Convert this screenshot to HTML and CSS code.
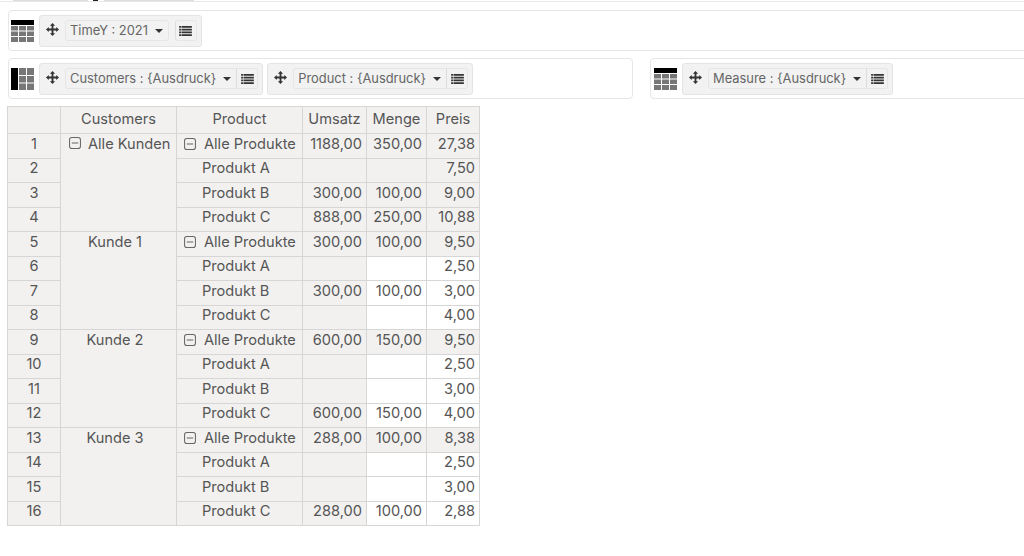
FILE: index.html
```html
<!DOCTYPE html>
<html lang="de">
<head>
<meta charset="utf-8">
<title>Pivot</title>
<link rel="stylesheet" href="styles.css">
</head>
<body>
<svg class="defs" width="0" height="0" aria-hidden="true">
  <symbol id="move" viewBox="0 0 14 14"><path d="M7 0 9.800 3H8V6H11V4.200L14 7 11 9.800V8H8V11H9.800L7 14 4.200 11H6V8H3V9.800L0 7 3 4.200V6H6V3H4.200Z" fill="#333"/></symbol>
  <symbol id="list" viewBox="0 0 14 11"><path d="M0 0h2v2H0zM2.600 0H14v2H2.600zM0 3h2v2H0zM2.600 3H14v2H2.600zM0 6h2v2H0zM2.600 6H14v2H2.600zM0 9h2v2H0zM2.600 9H14v2H2.600z" fill="#333"/></symbol>
  <symbol id="minus" viewBox="0 0 13 13"><rect x=".6" y=".6" width="11.8" height="11.8" rx="2.5" fill="none" stroke="#666" stroke-width="1.1"/><path d="M3 6.500h7" stroke="#666" stroke-width="1.1"/></symbol>
  <symbol id="rows" viewBox="0 0 23 22"><path d="M0 0h23v5H0z" fill="#000"/><path d="M0 6h7v4.500H0zM8 6h7v4.500H8zM16 6h7v4.500h-7zM0 11.500h7V16H0zM8 11.500h7V16H8zM16 11.500h7V16h-7zM0 17h7v5H0zM8 17h7v5H8zM16 17h7v5h-7z" fill="#777"/></symbol>
  <symbol id="cols" viewBox="0 0 23 22"><path d="M0 0h7v22H0z" fill="#000"/><path d="M8 0h7v7H8zM16 0h7v7h-7zM8 8h7v6.500H8zM16 8h7v6.500h-7zM8 15.500h7V22H8zM16 15.500h7V22h-7z" fill="#777"/></symbol>
</svg>

<div class="top-strip">
  <span class="strip-a"></span><span class="strip-b"></span><span class="strip-c"></span>
</div>

<div class="zone zone-time">
  <svg class="zone-icon"><use href="#rows"/></svg>
  <div class="chip">
    <svg class="move"><use href="#move"/></svg>
    <div class="pick pick-solo"><span class="pick-label">TimeY : 2021</span><span class="caret"></span></div>
    <div class="menu menu-solo"><svg class="list"><use href="#list"/></svg></div>
  </div>
</div>

<div class="zone-row">
  <div class="zone zone-left">
    <svg class="zone-icon"><use href="#cols"/></svg>
    <div class="chip">
      <svg class="move"><use href="#move"/></svg>
      <div class="pick"><span class="pick-label">Customers : {Ausdruck}</span><span class="caret"></span></div>
      <div class="menu"><svg class="list"><use href="#list"/></svg></div>
    </div>
    <div class="chip chip-next">
      <svg class="move"><use href="#move"/></svg>
      <div class="pick"><span class="pick-label">Product : {Ausdruck}</span><span class="caret"></span></div>
      <div class="menu"><svg class="list"><use href="#list"/></svg></div>
    </div>
  </div>
  <div class="zone zone-right">
    <svg class="zone-icon"><use href="#rows"/></svg>
    <div class="chip">
      <svg class="move"><use href="#move"/></svg>
      <div class="pick"><span class="pick-label">Measure : {Ausdruck}</span><span class="caret"></span></div>
      <div class="menu"><svg class="list"><use href="#list"/></svg></div>
    </div>
  </div>
</div>

<div class="pivot">
  <div class="c hd"></div><div class="c hd">Customers</div><div class="c hd">Product</div><div class="c hd">Umsatz</div><div class="c hd">Menge</div><div class="c hd">Preis</div>

  <div class="c n">1</div><div class="c cust span root"><svg class="minus"><use href="#minus"/></svg>Alle Kunden</div><div class="c prod"><svg class="minus"><use href="#minus"/></svg>Alle Produkte</div><div class="c num">1188,00</div><div class="c num">350,00</div><div class="c num">27,38</div>
  <div class="c n">2</div><div class="c prod sub">Produkt A</div><div class="c num"></div><div class="c num"></div><div class="c num">7,50</div>
  <div class="c n">3</div><div class="c prod sub">Produkt B</div><div class="c num">300,00</div><div class="c num">100,00</div><div class="c num">9,00</div>
  <div class="c n">4</div><div class="c prod sub">Produkt C</div><div class="c num">888,00</div><div class="c num">250,00</div><div class="c num">10,88</div>

  <div class="c n">5</div><div class="c cust span">Kunde 1</div><div class="c prod"><svg class="minus"><use href="#minus"/></svg>Alle Produkte</div><div class="c num">300,00</div><div class="c num">100,00</div><div class="c num">9,50</div>
  <div class="c n">6</div><div class="c prod sub">Produkt A</div><div class="c num"></div><div class="c num w"></div><div class="c num w">2,50</div>
  <div class="c n">7</div><div class="c prod sub">Produkt B</div><div class="c num">300,00</div><div class="c num w">100,00</div><div class="c num w">3,00</div>
  <div class="c n">8</div><div class="c prod sub">Produkt C</div><div class="c num"></div><div class="c num w"></div><div class="c num w">4,00</div>

  <div class="c n">9</div><div class="c cust span">Kunde 2</div><div class="c prod"><svg class="minus"><use href="#minus"/></svg>Alle Produkte</div><div class="c num">600,00</div><div class="c num">150,00</div><div class="c num">9,50</div>
  <div class="c n">10</div><div class="c prod sub">Produkt A</div><div class="c num"></div><div class="c num w"></div><div class="c num w">2,50</div>
  <div class="c n">11</div><div class="c prod sub">Produkt B</div><div class="c num"></div><div class="c num w"></div><div class="c num w">3,00</div>
  <div class="c n">12</div><div class="c prod sub">Produkt C</div><div class="c num">600,00</div><div class="c num w">150,00</div><div class="c num w">4,00</div>

  <div class="c n">13</div><div class="c cust span">Kunde 3</div><div class="c prod"><svg class="minus"><use href="#minus"/></svg>Alle Produkte</div><div class="c num">288,00</div><div class="c num">100,00</div><div class="c num">8,38</div>
  <div class="c n">14</div><div class="c prod sub">Produkt A</div><div class="c num"></div><div class="c num w"></div><div class="c num w">2,50</div>
  <div class="c n">15</div><div class="c prod sub">Produkt B</div><div class="c num"></div><div class="c num w"></div><div class="c num w">3,00</div>
  <div class="c n">16</div><div class="c prod sub">Produkt C</div><div class="c num">288,00</div><div class="c num w">100,00</div><div class="c num w">2,88</div>
</div>
</body>
</html>
```
FILE: styles.css
```css
* { box-sizing: border-box; }
html, body { height: 100%; }
body {
  margin: 0;
  background: #fff;
  color: #555;
  font-family: "Inter", "Liberation Sans", sans-serif;
  font-size: 14px;
  overflow: hidden;
}
.defs { position: absolute; }

.top-strip {
  height: 2px;
  display: flex;
  align-items: flex-start;
  border-bottom: 1px solid #e8e8e8;
  padding-left: 13px;
}
.strip-a { width: 75px; height: 1px; background: #ddd; }
.strip-b { width: 5px; height: 1px; margin-left: 5px; background: #222; }
.strip-c { width: 90px; height: 1px; margin-left: 6px; background: #ddd; }

.zone {
  height: 41px;
  display: flex;
  align-items: center;
  background: #fff;
  border: 1px solid #e6e6e6;
  border-radius: 4px;
  padding-left: 2px;
}
.zone-time { margin: 8px -4px 0 8px; }
.zone-row { display: flex; margin: 7px -4px 0 8px; }
.zone-left { width: 625px; }
.zone-right { margin-left: 17px; flex: 1; padding-left: 3px; }

.zone-icon { width: 23px; height: 22px; flex: none; }
.chip {
  height: 32px;
  margin-left: 5px;
  display: flex;
  align-items: center;
  background: #f2f2f2;
  border: 1px solid #e4e4e4;
  border-radius: 3px;
  padding: 0 4px 0 6px;
}
.chip-next { margin-left: 4px; }
.move { width: 13px; height: 13px; margin-right: 6px; flex: none; position: relative; top: -1px; }
.pick {
  height: 21px;
  display: flex;
  align-items: center;
  border: 1px solid #e6e6e6;
  border-radius: 3px 0 0 3px;
  padding: 0 5px 0 4px;
  background: #f2f2f2;
  white-space: nowrap;
  font-size: 12.9px;
  color: #666;
}
.pick-solo { border-radius: 3px; margin-right: 6px; }
.caret {
  margin-left: 7px;
  border-left: 4px solid transparent;
  border-right: 4px solid transparent;
  border-top: 4px solid #333;
  flex: none;
}
.menu {
  width: 22px;
  height: 21px;
  display: flex;
  align-items: center;
  justify-content: center;
  border: 1px solid #e6e6e6;
  border-left-color: #ddd;
  border-radius: 0 3px 3px 0;
  margin-left: -1px;
}
.menu-solo { margin-left: 0; border-radius: 3px; }
.list { width: 13px; height: 10px; }

.pivot {
  display: grid;
  width: 473px;
  margin: 7px 0 0 7px;
  grid-template-columns: 53px 116px 126px 64px 60px 53px;
  grid-template-rows: 27px repeat(16, 24.5px);
  border-top: 1px solid #d6d6d6;
  border-left: 1px solid #d6d6d6;
  font-size: 14.6px;
  line-height: 1;
}
.c {
  background: #f2f1f0;
  border-right: 1px solid #d6d6d6;
  border-bottom: 1px solid #d6d6d6;
  display: flex;
  align-items: center;
  white-space: nowrap;
  overflow: hidden;
  padding-bottom: 3px;
}
.hd { padding-bottom: 1px; }
.hd, .n { justify-content: center; }
.cust { justify-content: center; align-items: flex-start; padding-top: 3px; padding-right: 7px; }
.root { justify-content: flex-start; padding: 3px 0 0 8px; }
.span { grid-row: span 4; }
.prod { padding-left: 7px; }
.prod .minus { margin-right: 8px; }
.sub { padding-left: 25px; }
.num { justify-content: flex-end; padding-right: 4px; }
.w { background: #fff; }
.minus { width: 12px; height: 12px; margin-right: 7px; flex: none; }
```
